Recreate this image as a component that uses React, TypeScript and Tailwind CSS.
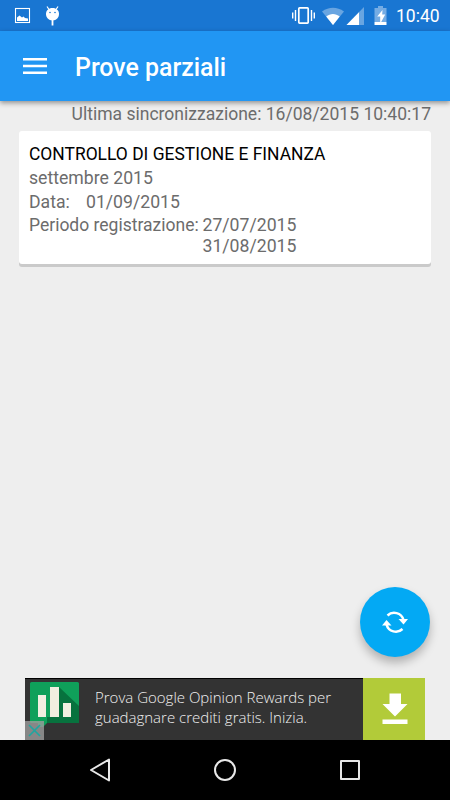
function StatusBar() {
  return (
    <div className="flex h-[31px] shrink-0 items-start bg-[#1976d2] text-white">
      <svg className="h-[31px] w-[64px]" viewBox="0 0 64 31" fill="none">
        <rect x="15.5" y="8.5" width="14" height="14" stroke="#fff" strokeWidth="1.1" />
        <path d="M17 21v-3.500l2.500-2 2.500 2 1.500-1 1.500 1.500 3 .5V21z" fill="#fff" />
        <path d="M47 6.500l2 3M58 6.500l-2 3" stroke="#fff" strokeWidth="1.200" />
        <path d="M52.500 8c4 0 6.500 2.500 6.500 6s-2.500 6.500-6.500 6.500S46 17.500 46 14s2.500-6 6.500-6z" fill="#fff" />
        <path d="M52.500 20v5.500" stroke="#fff" strokeWidth="1.800" />
        <circle cx="50" cy="12.500" r="0.800" fill="#1976d2" />
        <circle cx="55" cy="12.500" r="0.800" fill="#1976d2" />
      </svg>
      <svg className="ml-[222px] h-[31px] w-[106px]" viewBox="286 0 106 31" fill="none">
        <rect x="298.800" y="7.900" width="9.400" height="15.200" rx="0.800" stroke="#fff" strokeWidth="1.700" />
        <path d="M295.500 10v11M311.500 10v11M292.700 12.500v6M314.300 12.500v6" stroke="#fff" strokeWidth="1.400" />
        <path d="M322 11.500c7-5 15-5 22 0L333 25z" fill="#fff" fillOpacity="0.350" />
        <path d="M326.200 16.500c4-3.400 9.500-3.400 13.500 0L333 25z" fill="#fff" />
        <path d="M364 7v18h-17.500z" fill="#fff" fillOpacity="0.350" />
        <path d="M359 12.200V25h-12.500z" fill="#fff" />
        <path d="M374.500 8H378V6h5v2h3.500v14h-12z" fill="#fff" fillOpacity="0.400" />
        <path d="M374.500 22h12v3h-12z" fill="#fff" />
        <path d="M382.500 10l-5.300 6.500h3v5.500h1l4-7.500h-3z" fill="#fff" />
      </svg>
      <span className="ml-[4px] mt-[4px] text-[17.500px] leading-[24px]">10:40</span>
    </div>
  )
}

function Toolbar() {
  return (
    <header className="z-10 flex h-[70px] shrink-0 items-center bg-[#2196f3] pl-[23px] text-white shadow-[0_2px_5px_rgba(0,0,0,0.400)]">
      <svg className="h-[18px] w-6" viewBox="0 0 24 18" fill="#fff">
        <path d="M0 1h24v2.500H0zM0 7.700h24v2.500H0zM0 14.400h24v2.500H0z" />
      </svg>
      <h1 className="ml-[28px] mt-[3px] text-[24.900px] font-medium leading-[30px]">Prove parziali</h1>
    </header>
  )
}

function ExamCard() {
  return (
    <article className="mx-[19px] h-[133px] rounded-[3px] bg-white px-[10px] pt-[13px] text-[17.650px] leading-[21px] text-[#6c6c6c] shadow-[0_3px_0_#cacaca]">
      <h2 className="text-[17.430px] text-black">CONTROLLO DI GESTIONE E FINANZA</h2>
      <p className="mt-[3px]">settembre 2015</p>
      <div className="mt-[3px] flex">
        <span className="w-[57px]">Data:</span>
        <span>01/09/2015</span>
      </div>
      <div className="mt-[2px] flex">
        <span className="w-[173.500px] whitespace-nowrap text-[17.500px]">Periodo registrazione:</span>
        <div className="leading-[20.500px]">
          <p>27/07/2015</p>
          <p>31/08/2015</p>
        </div>
      </div>
    </article>
  )
}

function SyncButton() {
  return (
    <button className="absolute left-[360px] top-[587px] flex size-[70px] items-center justify-center rounded-full bg-[#03a9f4] shadow-[0_6px_10px_rgba(0,0,0,0.250)]">
      <svg className="h-[36px] w-[40px]" viewBox="375 604 40 36" fill="none">
        <path d="M387.500 615.500c5-4.800 14-3 16 4.500" stroke="#fff" strokeWidth="2.500" />
        <path d="M398.500 619h9.500l-4.500 5.500z" fill="#fff" />
        <path d="M402.500 629c-5 4.800-14 3-16-4.500" stroke="#fff" strokeWidth="2.500" />
        <path d="M391.500 625.500H382l4.500-5.500z" fill="#fff" />
      </svg>
    </button>
  )
}

function AdBanner() {
  return (
    <div className="mx-[25px] mt-auto flex h-[62px] shrink-0 bg-[#333]">
      <div className="w-[338px] border-t border-black">
        <div className="-mt-px flex">
          <svg className="h-[62px] w-[60px]" viewBox="25 678 60 62">
            <rect x="30" y="682" width="49" height="41" rx="1.500" fill="#0fa05a" />
            <path d="M59 687l20 19v17H44l-6-6h8l4 0V698z" fill="#07723e" />
            <path d="M38 717h9v6l-4 4h-5z" fill="#0fa05a" />
            <path d="M38 695h8v22h-8zM50 687h9v30h-9zM63 703h8v14h-8z" fill="#f1eee0" />
            <rect x="25" y="721" width="19" height="19" fill="#9c9c9c" fillOpacity="0.800" />
            <path d="M29 725l11 11M40 725l-11 11" stroke="#20a5a0" strokeWidth="1.700" />
          </svg>
          <p className="ml-[10px] whitespace-nowrap pt-[9px] font-['Open_Sans'] text-[15px] font-light leading-[20px] text-[#f0f0f0]">
            Prova Google Opinion Rewards per
            <br />
            guadagnare crediti gratis. Inizia.
          </p>
        </div>
      </div>
      <div className="flex-1 bg-[#b2cb39]">
        <svg className="h-[62px] w-[62px]" viewBox="363 678 62 62" fill="#fff">
          <path d="M389.500 693.500H401V704h6.500L395 716.500 382.500 704h7zM382.500 719.500h25v4.500h-25z" />
        </svg>
      </div>
    </div>
  )
}

function NavigationBar() {
  return (
    <nav className="h-[60px] shrink-0 bg-black">
      <svg className="h-[60px] w-full" viewBox="0 740 450 60" fill="none" stroke="#e8e8e8" strokeWidth="2" strokeLinejoin="round">
        <path d="M109 759.500v21L91 770z" />
        <circle cx="225" cy="770" r="10" />
        <rect x="341" y="761" width="18" height="18" />
      </svg>
    </nav>
  )
}

export default function App() {
  return (
    <div className="relative flex h-[800px] w-[450px] flex-col overflow-hidden bg-[#eee] font-['Roboto',sans-serif]">
      <StatusBar />
      <Toolbar />
      <main className="flex flex-1 flex-col">
        <p className="mr-[19px] h-[30px] pt-[3px] text-right text-[17.550px] leading-[21px] text-[#6c6c6c]">
          Ultima sincronizzazione: 16/08/2015 10:40:17
        </p>
        <ExamCard />
        <AdBanner />
      </main>
      <SyncButton />
      <NavigationBar />
    </div>
  )
}
